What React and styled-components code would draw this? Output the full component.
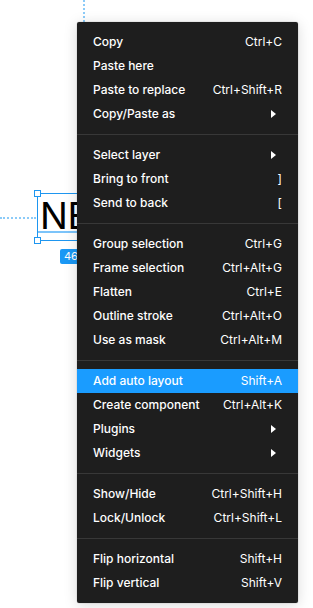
import React from 'react';
import styled, { createGlobalStyle } from 'styled-components';

const GlobalStyle = createGlobalStyle`
  html, body {
    margin: 0;
    padding: 0;
    background: #ffffff;
  }
  body {
    font-family: Inter, "Noto Sans", sans-serif;
    -webkit-font-smoothing: antialiased;
  }
`;

const Canvas = styled.div`
  position: relative;
  width: 313px;
  height: 608px;
  overflow: hidden;
  background: #ffffff;
`;

// dotted alignment guides on the canvas
const GuideV = styled.div`
  position: absolute;
  left: 83px;
  top: 0;
  height: 22px;
  border-left: 2px dotted #8ccbf8;
`;

const GuideH = styled.div`
  position: absolute;
  left: 0;
  top: 217px;
  width: 36px;
  border-top: 2px dotted #8ccbf8;
`;

const Selection = styled.div`
  position: absolute;
  left: 37px;
  top: 193px;
  width: 120px;
  height: 48px;
  border: 1px solid #1e96f0;
  box-sizing: border-box;
`;

const BigText = styled.div`
  position: absolute;
  left: 2px;
  top: -2px;
  font-family: Inter, sans-serif;
  font-size: 37px;
  line-height: 48px;
  color: #000000;
  white-space: nowrap;
  letter-spacing: -0.5px;
`;

const Baseline = styled.div`
  position: absolute;
  left: 0;
  right: 0;
  top: 37px;
  height: 2px;
  background: #7cc4fa;
`;

const Handle = styled.div`
  position: absolute;
  left: -4px;
  ${({ $bottom }) => ($bottom ? 'bottom: -4px;' : 'top: -4px;')}
  width: 7px;
  height: 7px;
  background: #ffffff;
  border: 1px solid #1e96f0;
  box-sizing: border-box;
`;

const SizeBadge = styled.div`
  position: absolute;
  left: 60px;
  top: 249px;
  height: 15px;
  padding: 0 4px;
  background: #1a98f5;
  color: #ffffff;
  border-radius: 2px;
  font-size: 11px;
  line-height: 15px;
  white-space: nowrap;
`;

const Menu = styled.div`
  position: absolute;
  left: 77px;
  top: 22px;
  width: 221px;
  padding: 8px 0;
  background: #1e1e1e;
  border-radius: 2px;
  box-shadow: 0 2px 14px rgba(0, 0, 0, 0.15), 0 0 0 0.5px rgba(0, 0, 0, 0.1);
  box-sizing: border-box;
  display: flex;
  flex-direction: column;
`;

const Separator = styled.div`
  height: 1px;
  margin: 8px 0;
  background: #383838;
`;

const Row = styled.div`
  display: flex;
  align-items: center;
  justify-content: space-between;
  height: 24px;
  padding: 0 16px 1px;
  box-sizing: border-box;
  background: ${({ $active }) => ($active ? '#1a9cff' : 'transparent')};
  color: #ffffff;
  font-size: 12px;
  font-weight: 500;
  white-space: nowrap;
`;

const Shortcut = styled.span`
  color: #ffffff;
  font-weight: 400;
`;

const Arrow = styled.span`
  width: 0;
  height: 0;
  margin-right: 6px;
  border-top: 4px solid transparent;
  border-bottom: 4px solid transparent;
  border-left: 5px solid #ffffff;
`;

const groups = [
  [
    { label: 'Copy', key: 'Ctrl+C' },
    { label: 'Paste here' },
    { label: 'Paste to replace', key: 'Ctrl+Shift+R' },
    { label: 'Copy/Paste as', sub: true },
  ],
  [
    { label: 'Select layer', sub: true },
    { label: 'Bring to front', key: ']' },
    { label: 'Send to back', key: '[' },
  ],
  [
    { label: 'Group selection', key: 'Ctrl+G' },
    { label: 'Frame selection', key: 'Ctrl+Alt+G' },
    { label: 'Flatten', key: 'Ctrl+E' },
    { label: 'Outline stroke', key: 'Ctrl+Alt+O' },
    { label: 'Use as mask', key: 'Ctrl+Alt+M' },
  ],
  [
    { label: 'Add auto layout', key: 'Shift+A', active: true },
    { label: 'Create component', key: 'Ctrl+Alt+K' },
    { label: 'Plugins', sub: true },
    { label: 'Widgets', sub: true },
  ],
  [
    { label: 'Show/Hide', key: 'Ctrl+Shift+H' },
    { label: 'Lock/Unlock', key: 'Ctrl+Shift+L' },
  ],
  [
    { label: 'Flip horizontal', key: 'Shift+H' },
    { label: 'Flip vertical', key: 'Shift+V' },
  ],
];

function MenuItem({ item }) {
  return (
    <Row $active={item.active}>
      <span>{item.label}</span>
      {item.sub ? <Arrow /> : item.key ? <Shortcut>{item.key}</Shortcut> : null}
    </Row>
  );
}

export default function App() {
  return (
    <Canvas>
      <GlobalStyle />
      <GuideV />
      <GuideH />
      <Selection>
        <BigText>NE</BigText>
        <Baseline />
        <Handle />
        <Handle $bottom />
      </Selection>
      <SizeBadge>46 × 48</SizeBadge>
      <Menu>
        {groups.map((group, i) => (
          <React.Fragment key={i}>
            {i > 0 && <Separator />}
            {group.map((item) => (
              <MenuItem key={item.label} item={item} />
            ))}
          </React.Fragment>
        ))}
      </Menu>
    </Canvas>
  );
}
